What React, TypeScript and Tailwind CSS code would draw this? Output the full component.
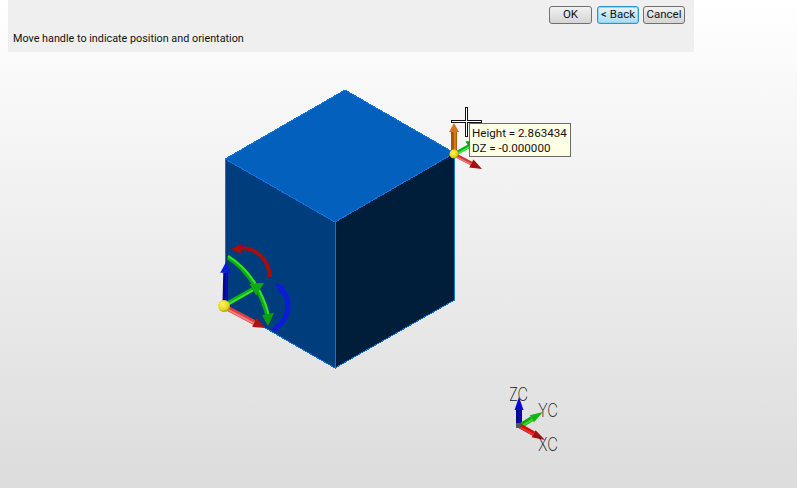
const font = "font-['Roboto',sans-serif]";

function Btn({ label, active, w }: { label: string; active?: boolean; w: string }) {
  return (
    <button
      className={`${w} h-[18px] rounded-[3px] border text-[11.5px] leading-none text-[#111] ${
        active
          ? "border-[#2f93c9] bg-gradient-to-b from-[#e4f4fc] to-[#a9dbf6] shadow-[inset_0_0_0_1px_#8fd6f7]"
          : "border-[#707070] bg-gradient-to-b from-[#f2f2f2] to-[#d4d4d4]"
      }`}
    >
      {label}
    </button>
  );
}

type ArrowProps = {
  x1: number;
  y1: number;
  x2: number;
  y2: number;
  color: string;
  shine: string;
  head: string;
  w?: number;
  hl?: number;
  hw?: number;
};

// shaft with a lighter stripe and a cone at the end
function Arrow({ x1, y1, x2, y2, color, shine, head, w = 4, hl = 11, hw = 6 }: ArrowProps) {
  const dx = x2 - x1;
  const dy = y2 - y1;
  const len = Math.hypot(dx, dy);
  const ux = dx / len;
  const uy = dy / len;
  const bx = x2 - ux * hl;
  const by = y2 - uy * hl;
  return (
    <g>
      <line x1={x1} y1={y1} x2={bx} y2={by} stroke={color} strokeWidth={w} />
      <line x1={x1 - uy} y1={y1 + ux} x2={bx - uy} y2={by + ux} stroke={shine} strokeWidth={w / 2.5} />
      <polygon points={`${x2},${y2} ${bx - uy * hw},${by + ux * hw} ${bx + uy * hw},${by - ux * hw}`} fill={head} />
    </g>
  );
}

function Scene() {
  return (
    <svg viewBox="0 0 797 488" className="absolute inset-0 h-[488px] w-[797px]">
      <defs>
        <radialGradient id="ball" cx="0.4" cy="0.35" r="0.7">
          <stop offset="0" stopColor="#fff45a" />
          <stop offset="0.7" stopColor="#e2d41a" />
          <stop offset="1" stopColor="#8f8610" />
        </radialGradient>
      </defs>

      {/* cube */}
      <g shapeRendering="crispEdges" stroke="#0f74e0" strokeWidth="1">
        <polygon points="345,90 454.5,153 335,222 225,159" fill="#0460bd" />
        <polygon points="225,159 335,222 335,368 225,305" fill="#003d7c" />
        <polygon points="335,222 454.5,153 454.5,300 335,368" fill="#001d3a" />
      </g>

      {/* corner handle */}
      <Arrow x1={455} y1={155} x2={482} y2={169} color="#d83434" shine="#f47a7a" head="#a80c0c" w={4} hl={12} hw={4.5} />
      <Arrow x1={455} y1={154} x2={478} y2={141} color="#12b012" shine="#3cf03c" head="#12a012" w={4} />
      <Arrow x1={454} y1={152} x2={454} y2={123} color="#a85400" shine="#d87a1c" head="#d9741a" w={6} hl={9} hw={5} />
      <circle cx={454} cy={154} r={4.5} fill="url(#ball)" />

      {/* cursor */}
      <g shapeRendering="crispEdges" fill="none">
        <path d="M451 121.5H482M466.5 107V137" stroke="#111" strokeWidth="3" />
        <path d="M452 121.5H481M466.5 108V136" stroke="#fff" strokeWidth="1" />
      </g>

      {/* rotation handle */}
      <path d="M238 249 C250 246 268 254 270 277" fill="none" stroke="#a80d0d" strokeWidth="4" />
      <polygon points="231,249 241,244 241,254" fill="#a80d0d" />
      <path d="M279 287 C292 298 292 318 273 330" fill="none" stroke="#0b1bd6" strokeWidth="5" />
      <polygon points="275,283 285,286 280,294" fill="#0b1bd6" />
      <path d="M228 257 C248 270 262 292 268 317" fill="none" stroke="#12a812" strokeWidth="4.5" />
      <path d="M228 256 C249 269 263 291 269 316" fill="none" stroke="#2ee82e" strokeWidth="2" />
      <polygon points="268,326 262,315 274,313" fill="#0f9e0f" />
      <Arrow x1={225} y1={305} x2={264} y2={283} color="#12b012" shine="#35e835" head="#12a812" w={4.5} hl={13} hw={7} />
      <Arrow x1={225} y1={307} x2={265} y2={328} color="#e43c3c" shine="#f88080" head="#b01010" w={5} hl={12} hw={5} />
      <Arrow x1={225} y1={304} x2={226} y2={262} color="#06068e" shine="#0a10b8" head="#0a20d0" w={5} hl={11} hw={5.5} />
      <circle cx={224} cy={306} r={6} fill="url(#ball)" />

      {/* view triad */}
      <Arrow x1={519} y1={426} x2={519} y2={397} color="#07078c" shine="#0a0ab0" head="#0a0ac8" w={6} hl={13} hw={4.5} />
      <Arrow x1={520} y1={426} x2={543} y2={412} color="#0fa80f" shine="#2ee02e" head="#0fb80f" w={5} hl={13} hw={4} />
      <Arrow x1={520} y1={426} x2={545} y2={440} color="#d01010" shine="#f03030" head="#a80c0c" w={5} hl={13} hw={4} />
      <rect x={516} y={423} width={5} height={5} fill="#555" />
      <g className="font-['Inter',sans-serif]" fontSize="19" fill="#111" fontWeight="200">
        <text x={509} y={401} textLength={19} lengthAdjust="spacingAndGlyphs">ZC</text>
        <text x={538} y={417} textLength={20} lengthAdjust="spacingAndGlyphs">YC</text>
        <text x={538} y={451} textLength={20} lengthAdjust="spacingAndGlyphs">XC</text>
      </g>
    </svg>
  );
}

export default function App() {
  return (
    <div className={`relative h-[488px] w-[797px] overflow-hidden bg-gradient-to-b from-white to-[#dcdcdc] ${font}`}>
      <div className="relative z-10 ml-2 flex h-[52px] w-[686px] flex-col bg-[#efefef] pl-[5px] pr-[9px]">
        <div className="mt-[6px] flex justify-end gap-[4px]">
          <span className="mr-px flex">
            <Btn label="OK" w="w-[43px]" />
          </span>
          <Btn label="< Back" active w="w-[42px]" />
          <Btn label="Cancel" w="w-[42px]" />
        </div>
        <p className="mt-[7px] text-[10.8px] leading-[16px] text-[#111]">
          Move handle to indicate position and orientation
        </p>
      </div>
      <Scene />
      <div className="absolute left-[469px] top-[123px] h-[34px] w-[102px] border border-[#6b6b6b] bg-[#ffffe6] px-[2px] pt-[2px] text-[11.6px] leading-[15px] text-[#111]">
        <div className="whitespace-nowrap">Height = 2.863434</div>
        <div className="whitespace-nowrap">DZ = -0.000000</div>
      </div>
    </div>
  );
}
